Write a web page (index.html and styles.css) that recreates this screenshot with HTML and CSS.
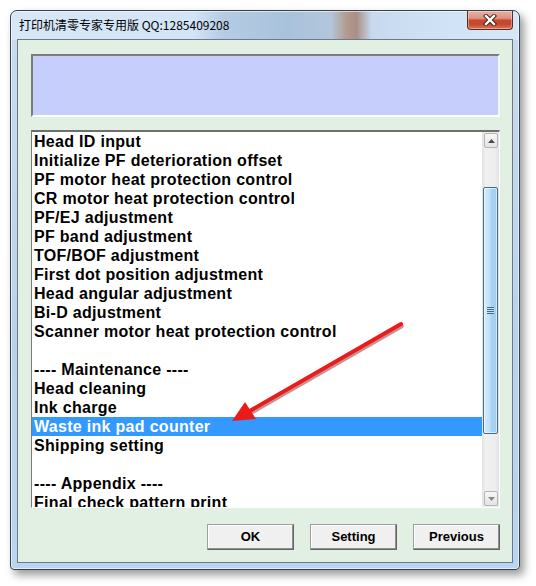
FILE: index.html
```html
<!DOCTYPE html>
<html lang="zh-CN">
<head>
    <meta charset="UTF-8">
    <title>打印机清零专家专用版</title>
    <link rel="stylesheet" href="styles.css">
</head>
<body>
    <div class="window">
        <div class="titlebar">
            <span class="title">打印机清零专家专用版 QQ:1285409208</span>
            <div class="close">
                <svg width="14" height="12" viewBox="0 0 14 12">
                    <path d="M3 2 L11 10 M11 2 L3 10" stroke="#3b1a16" stroke-width="4.2" stroke-linecap="square"/>
                    <path d="M3 2 L11 10 M11 2 L3 10" stroke="#fff" stroke-width="2.4" stroke-linecap="square"/>
                </svg>
            </div>
        </div>
        <div class="client">
            <div class="status"></div>

            <div class="listbox">
                <ul class="items">
                    <li>Head ID input</li>
                    <li>Initialize PF deterioration offset</li>
                    <li>PF motor heat protection control</li>
                    <li>CR motor heat protection control</li>
                    <li>PF/EJ adjustment</li>
                    <li>PF band adjustment</li>
                    <li>TOF/BOF adjustment</li>
                    <li>First dot position adjustment</li>
                    <li>Head angular adjustment</li>
                    <li>Bi-D adjustment</li>
                    <li>Scanner motor heat protection control</li>
                    <li>&nbsp;</li>
                    <li>---- Maintenance ----</li>
                    <li>Head cleaning</li>
                    <li>Ink charge</li>
                    <li class="selected">Waste ink pad counter</li>
                    <li>Shipping setting</li>
                    <li>&nbsp;</li>
                    <li>---- Appendix ----</li>
                    <li>Final check pattern print</li>
                </ul>
                <div class="scrollbar">
                    <div class="sb-btn">
                        <svg width="7" height="4" viewBox="0 0 7 4"><path d="M0 4 L3.5 0 L7 4 Z" fill="#4a4a4a"/></svg>
                    </div>
                    <div class="sb-track">
                        <div class="sb-thumb"><span class="grip"></span></div>
                    </div>
                    <div class="sb-btn">
                        <svg width="7" height="4" viewBox="0 0 7 4"><path d="M0 0 L7 0 L3.5 4 Z" fill="#8a8a8a"/></svg>
                    </div>
                </div>
            </div>

            <div class="buttons">
                <button class="button">OK</button>
                <button class="button">Setting</button>
                <button class="button">Previous</button>
            </div>
        </div>
    </div>

    <svg class="arrow" width="536" height="586" viewBox="0 0 536 586">
        <line x1="401" y1="325" x2="248" y2="413" stroke="#8a0b0b" stroke-opacity="0.45" stroke-width="4" stroke-linecap="round" transform="translate(0.8 1.2)"/>
        <line x1="401" y1="324" x2="248" y2="412" stroke="#ec1b1b" stroke-width="4" stroke-linecap="round"/>
        <polygon points="232,421 245,402 256,419" fill="#ec1b1b"/>
    </svg>
</body>
</html>
```

FILE: styles.css
```css
body {
    margin: 0;
    width: 536px;
    height: 586px;
    position: relative;
    overflow: hidden;
    background: #fff;
    font-family: "Liberation Sans", Arial, sans-serif;
}

/* Window frame */
.window {
    margin: 10px 0 0 10px;
    width: 510px;
    height: 560px;
    box-sizing: border-box;
    border: 1px solid #35414d;
    border-radius: 7px 7px 4px 4px;
    padding: 0 6px 6px;
    display: flex;
    flex-direction: column;
    background:
        linear-gradient(90deg, #d7e7f7 0%, #d2e4f6 36%, #b4cbe3 42%, #a9c2dc 55%, #b3c6da 63%, #b49a90 66%, #a98f86 68%, #c6d9ee 71%, #d0e3f6 85%, #d5e6f7 100%) 0 0 / 100% 29px no-repeat,
        linear-gradient(180deg, #c9dcf0 0%, #b9d2ec 60%, #bad5f1 100%);
    box-shadow: 4px 5px 8px rgba(0, 0, 0, 0.4), inset 0 0 0 1px rgba(255, 255, 255, 0.55);
}

.titlebar {
    height: 28px;
    display: flex;
    justify-content: space-between;
    align-items: flex-start;
}

.title {
    margin: 6px 0 0 2px;
    font-family: "Noto Sans CJK SC", "Noto Sans", sans-serif;
    font-size: 12px;
    line-height: 16px;
    color: #000;
}

.close {
    width: 46px;
    height: 19px;
    box-sizing: border-box;
    border: 1px solid #5b2b24;
    border-top: none;
    border-radius: 0 0 4px 4px;
    display: flex;
    align-items: center;
    justify-content: center;
    background: linear-gradient(180deg, #eab1a4 0%, #dd9483 40%, #c8472f 52%, #c44a31 75%, #dc7659 100%);
    box-shadow: inset 0 0 0 1px rgba(255, 255, 255, 0.35);
}

/* Client area */
.client {
    flex: 1;
    display: flex;
    flex-direction: column;
    border: 1px solid #6c7a88;
    background: #e1f0e3;
    padding: 14px 12px 0 13px;
}

.status {
    height: 63px;
    box-sizing: border-box;
    background: #c6cefb;
    border: 2px solid;
    border-color: #7c7c7c #f4f4f4 #fff #7c7c7c;
}

.listbox {
    margin-top: 13px;
    height: 378px;
    box-sizing: border-box;
    display: flex;
    background: #fff;
    border-style: solid;
    border-width: 2px 1px 1px 1px;
    border-color: #6e6e6e #fff #fff #7a7a7a;
}

.items {
    flex: 1;
    list-style: none;
    margin: 0;
    padding: 0;
    overflow: hidden;
}

.items li {
    height: 19px;
    line-height: 19px;
    padding-left: 2px;
    font-size: 16px;
    font-weight: bold;
    letter-spacing: 0.3px;
    white-space: nowrap;
    color: #000;
}

.items li.selected {
    background: #3399ff;
    color: #fff;
}

/* Scrollbar */
.scrollbar {
    width: 17px;
    display: flex;
    flex-direction: column;
    background: linear-gradient(90deg, #e2e2e2 0%, #f0f0f0 20%, #ededed 80%, #e2e2e2 100%);
}

.sb-btn {
    height: 15px;
    margin: 1px 1px 1px 2px;
    box-sizing: border-box;
    border: 1px solid #b4b4b4;
    border-radius: 2px;
    background: linear-gradient(180deg, #f7f7f7, #e4e4e4);
    display: flex;
    align-items: center;
    justify-content: center;
}

.sb-track {
    flex: 1;
    padding-top: 38px;
}

.sb-thumb {
    height: 247px;
    margin: 0 1px 0 1px;
    box-sizing: border-box;
    border: 1px solid #3f6d96;
    border-radius: 2px;
    background: linear-gradient(90deg, #d6ecfb 0%, #bfe0f7 45%, #a9d3f0 55%, #a2cdec 100%);
    box-shadow: inset 0 0 0 1px rgba(255, 255, 255, 0.55);
    display: flex;
    align-items: center;
    justify-content: center;
}

.grip {
    width: 7px;
    height: 7px;
    background: repeating-linear-gradient(180deg, #3b6a93 0 1px, #c9e4f7 1px 2px);
}

/* Buttons */
.buttons {
    display: flex;
    justify-content: flex-end;
    gap: 16px;
    margin: 16px 0 0 0;
}

.button {
    width: 87px;
    height: 26px;
    padding: 0 0 2px;
    font-family: "Liberation Sans", Arial, sans-serif;
    font-size: 13px;
    font-weight: bold;
    color: #000;
    background: #f0f0f0;
    border: 1px solid;
    border-color: #a0a0a0 #646464 #646464 #a0a0a0;
    box-shadow: inset -1px -1px 0 #8f8f8f, inset 1px 1px 0 #fff;
}

/* Annotation arrow over the dialog */
.arrow {
    position: absolute;
    top: 0;
    left: 0;
    pointer-events: none;
}
```
